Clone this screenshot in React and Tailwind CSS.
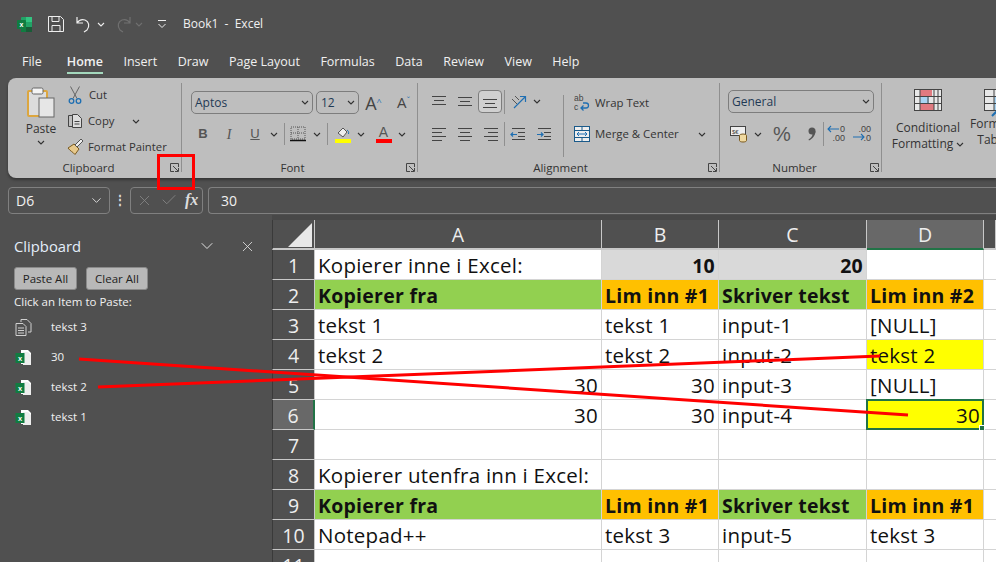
import React from 'react';
import { ChevronDown, X, Check } from 'lucide-react';

const Chev = ({ className = '', color = '#333' }) => (
  <svg width="8" height="5" viewBox="0 0 8 5" className={`shrink-0 ${className}`} fill="none" stroke={color} strokeWidth="1.1">
    <path d="M1 1l3 3 3-3" />
  </svg>
);

const Launcher = ({ className = '' }) => (
  <svg width="9" height="9" viewBox="0 0 9 9" className={className} fill="none" stroke="#444" strokeWidth="1">
    <path d="M8.5 4V.5H.5v8H4" />
    <path d="M3 3l5 5M8.5 5v3.5H5" />
  </svg>
);

const Lines = ({ widths, y = 0 }) => (
  <svg width="16" height="14" viewBox="0 0 16 14" stroke="#444" strokeWidth="1" fill="none">
    {widths.map(([x1, x2], i) => (
      <path key={i} d={`M${x1} ${y + 1.5 + i * 4}H${x2}`} />
    ))}
  </svg>
);

const Indent = ({ right }) => (
  <svg width="16" height="14" viewBox="0 0 16 14" fill="none">
    <path d="M2 1.500h13M8 5.500h7M8 9.500h7M2 12.500h13" stroke="#444" />
    {right
      ? <path d="M1 7.500h6M5 5.500l2 2-2 2" stroke="#1f6fb2" strokeWidth="1.200" />
      : <path d="M7 7.500H1M3 5.500l-2 2 2 2" stroke="#1f6fb2" strokeWidth="1.200" />}
  </svg>
);

const ExcelLogo = () => (
  <svg width="17" height="17" viewBox="0 0 17 17">
    <rect x="5" y="1" width="11" height="15" rx="1" fill="#21a366" />
    <rect x="10" y="1" width="6" height="5" fill="#33c481" />
    <rect x="10" y="11" width="6" height="5" fill="#185c37" />
    <rect x="5" y="11" width="5" height="5" fill="#107c41" />
    <rect x="1" y="4" width="9" height="9" rx="1" fill="#107c41" />
    <text x="5.5" y="11" textAnchor="middle" fontSize="7" fontWeight="700" fill="#fff" fontFamily="Liberation Sans">x</text>
  </svg>
);

const ClipExcel = () => (
  <svg width="17" height="17" viewBox="0 0 17 17">
    <path d="M6 1h7l3 3v11H6z" fill="#fff" />
    <path d="M8 3h5l3 3v10H8z" fill="#eee" />
    <rect x="0.5" y="4" width="9" height="10" fill="#107c41" />
    <text x="5" y="12" textAnchor="middle" fontSize="7.5" fontWeight="700" fill="#fff" fontFamily="Liberation Sans">x</text>
  </svg>
);

const ClipText = () => (
  <svg width="17" height="17" viewBox="0 0 17 17" fill="none" stroke="#d0d0d0" strokeWidth="1">
    <path d="M6 3V.5h6l4 4V13h-3" />
    <path d="M1 4.500h7l3 3v9H1z" />
    <path d="M3 9h6M3 11.500h6M3 14h6" />
  </svg>
);

const PasteIcon = () => (
  <svg width="30" height="32" viewBox="0 0 30 32">
    <rect x="2" y="4" width="19" height="25" rx="1" fill="#dcdcdc" stroke="#dca63f" strokeWidth="2" />
    <rect x="6" y="1" width="11" height="6" rx="1.500" fill="#f4f4f4" stroke="#666" />
    <rect x="13" y="11" width="15" height="19" fill="#e6e6e6" stroke="#666" />
  </svg>
);

const CutIcon = () => (
  <svg width="14" height="18" viewBox="0 0 14 18" fill="none">
    <path d="M2.500 0.500l6.500 12M11.500 0.500L5 12.500" stroke="#666" />
    <circle cx="3.500" cy="15" r="2.300" stroke="#1f6fb2" strokeWidth="1.300" />
    <circle cx="10.500" cy="15" r="2.300" stroke="#1f6fb2" strokeWidth="1.300" />
  </svg>
);

const CopyIcon = () => (
  <svg width="16" height="16" viewBox="0 0 16 16" fill="none" stroke="#444">
    <path d="M5 2.500H1.500v11H5" />
    <path d="M5.500 1.500h5l4 4v9h-9z" fill="#ddd" />
    <path d="M7.500 8.500h5M7.500 11h5" />
  </svg>
);

const BrushIcon = () => (
  <svg width="17" height="17" viewBox="0 0 17 17">
    <path d="M1 10l6-4 5 5-4 5.500C6 14 3 13 1 10z" fill="#e8c98b" stroke="#7a5a20" />
    <path d="M8 7l6-6 2 2-6 6z" fill="#eee" stroke="#555" />
  </svg>
);

const BorderIcon = () => (
  <svg width="16" height="16" viewBox="0 0 16 16" fill="none" stroke="#555" strokeWidth="1" strokeDasharray="1 1">
    <path d="M1 1h14v12H1zM8 1v12M1 7h14" />
    <path d="M0 14.500h16" stroke="#111" strokeWidth="1.500" strokeDasharray="none" />
  </svg>
);

const FillIcon = () => (
  <svg width="16" height="17" viewBox="0 0 16 17">
    <path d="M3 7l5-5 4 4-4 5z" fill="#eee" stroke="#555" />
    <path d="M12 4c1.500 1 2 2 1.500 4" stroke="#1f6fb2" fill="none" />
    <rect y="13" width="16" height="4" fill="#ffff00" />
  </svg>
);

const OrientIcon = () => (
  <svg width="18" height="16" viewBox="0 0 18 16" fill="none" stroke="#555">
    <path d="M2 5l5 5M5 2l4 4" />
    <path d="M4 14L15 3M10 2.500h5.500V8" stroke="#1f6fb2" strokeWidth="1.200" />
  </svg>
);

const WrapIcon = () => (
  <svg width="16" height="18" viewBox="0 0 16 18" fill="none">
    <path d="M9 9h3a2.500 2.500 0 010 5H7M9.500 11.500L7 14l2.500 2.500" stroke="#1f6fb2" strokeWidth="1.300" />
    <text x="0" y="7" fontSize="8.500" fill="#444" fontFamily="Liberation Sans">ab</text>
    <text x="0" y="16" fontSize="8.500" fill="#444" fontFamily="Liberation Sans">c</text>
  </svg>
);

const MergeIcon = () => (
  <svg width="16" height="16" viewBox="0 0 16 16" fill="none">
    <rect x="0.500" y="0.500" width="15" height="15" fill="#eee" stroke="#1a5a8a" />
    <path d="M1 4.500h14M1 11.500h14M8 1v3M8 12v3" stroke="#1a5a8a" />
    <path d="M3 8h10M5 6L3 8l2 2M11 6l2 2-2 2" stroke="#1f6fb2" />
  </svg>
);

const CondIcon = () => (
  <svg width="28" height="22" viewBox="0 0 28 22" fill="none">
    <rect x="0.500" y="0.500" width="27" height="21" fill="#e8e8e8" stroke="#444" />
    <rect x="6" y="1" width="12" height="6" fill="#e07a80" />
    <rect x="6" y="8" width="9" height="6" fill="#a8d4f2" />
    <rect x="6" y="15" width="14" height="6" fill="#e07a80" />
    <path d="M1 7.500h26M1 14.500h26M6 1v20M14 7v8M20 1v20M24 1v20" stroke="#444" />
  </svg>
);

const TableIcon = () => (
  <svg width="28" height="28" viewBox="0 0 28 28" fill="none">
    <rect x="0.500" y="0.500" width="27" height="21" fill="#e8e8e8" stroke="#444" />
    <rect x="10" y="8" width="17" height="13" fill="#a8d4f2" />
    <path d="M1 7.500h26M1 14.500h26M10 1v20" stroke="#444" />
    <path d="M8 27l8-8" stroke="#1f6fb2" strokeWidth="2" />
  </svg>
);

const CurrencyIcon = () => (
  <svg width="20" height="18" viewBox="0 0 20 18" fill="none">
    <rect x="0.500" y="1.500" width="15" height="9" fill="#eee" stroke="#444" />
    <text x="2" y="9" fontSize="6" fill="#444" fontFamily="Liberation Sans">$€</text>
    <ellipse cx="13" cy="10.500" rx="3.500" ry="1.500" fill="#f0d9a0" stroke="#7a5a20" />
    <path d="M9.500 10.500v5c0 2 7 2 7 0v-5" fill="#f0d9a0" stroke="#7a5a20" />
  </svg>
);

const CommaIcon = () => (
  <svg width="9" height="14" viewBox="0 0 9 14" fill="#555">
    <circle cx="5" cy="4" r="3.500" />
    <path d="M8.500 4c0 4-2.500 7.500-6.500 9.500l-.5-1C4 11 5.500 9 5.500 7z" />
  </svg>
);

const DecimalIcon = ({ more }) => (
  <div className="relative w-[16px] h-[18px] font-['Liberation_Sans'] text-[9px] leading-[9px] text-[#444] text-right">
    <div>{more ? '.00' : '0'}</div>
    <div>{more ? '.0' : '.00'}</div>
    <svg width="12" height="8" viewBox="0 0 12 8" className={`absolute left-[-2px] ${more ? 'top-[8px]' : 'top-0'}`} fill="none" stroke="#1f6fb2" strokeWidth="1.100">
      {more ? <path d="M0 4h11M8 1l3 3-3 3" /> : <path d="M12 4H1M4 1L1 4l3 3" />}
    </svg>
  </div>
);

const Sep = ({ className = '' }) => <div className={`w-px bg-[#8f8f8f] ${className}`} />;

const Slot = ({ w, children, active, className = '' }) => (
  <div className={`flex items-center justify-center shrink-0 ${w} ${className} ${active ? 'h-[23px] rounded-[4px] border border-[#7d7d7d] bg-[#d0d0d0]' : ''}`}>
    {children}
  </div>
);

const Group = ({ w, label, launcher, children, labelClass = '' }) => (
  <div className={`relative shrink-0 h-[89px] mt-[5px] ${w} border-r border-[#8f8f8f] flex flex-col`}>
    <div className="flex-1 min-h-0">{children}</div>
    <div className={`h-[18px] -mb-[5px] flex items-center justify-center text-[11.5px] text-[#333] ${labelClass}`}>{label}</div>
    {launcher && (
      <div className="absolute right-[2px] bottom-0 flex">
        <Launcher />
      </div>
    )}
  </div>
);

const ClipboardGroup = () => (
  <Group w="w-[174px]" label="Clipboard" launcher labelClass="pr-[12px]">
    <div className="flex h-full">
      <div className="w-[54px] flex flex-col items-center pl-[12px] pt-[4px]">
        <PasteIcon />
        <span className="text-[12px] text-[#333] mt-[2px] leading-[16px]">Paste</span>
        <Chev className="mt-[3px]" />
      </div>
      <div className="flex flex-col text-[11.3px] text-[#333] leading-[26px] pl-[5px] -mt-px">
        <div className="flex items-center gap-[7px] h-[26px] pl-[1px]">
          <CutIcon />
          Cut
        </div>
        <div className="flex items-center gap-[5px] h-[26px]">
          <CopyIcon />
          Copy
          <Chev className="ml-[13px]" />
        </div>
        <div className="flex items-center gap-[4px] h-[25px]">
          <BrushIcon />
          Format Painter
        </div>
      </div>
    </div>
  </Group>
);

const FontGroup = () => (
  <Group w="w-[236px]" label="Font" launcher labelClass="pr-[14px]">
    <div className="pl-[9px] pt-[8px]">
      <div className="flex items-center gap-[3px]">
        <div className="w-[122px] h-[23px] rounded-[5px] border border-[#7d7d7d] flex items-center justify-between px-[3px] text-[12px] text-[#1f3a55]">
          Aptos
          <Chev />
        </div>
        <div className="w-[43px] h-[23px] rounded-[5px] border border-[#7d7d7d] flex items-center justify-between pl-[4px] pr-[3px] text-[12px] text-[#1f3a55]">
          12
          <Chev />
        </div>
        <div className="w-[27px] -ml-[2px] text-[18px] leading-none text-[#444] text-center">A<sup className="text-[#1f6fb2] text-[9px]">^</sup></div>
        <div className="w-[27px] text-[15px] leading-none text-[#444] text-center">A<sup className="text-[#1f6fb2] text-[9px]">ˇ</sup></div>
      </div>
      <div className="flex items-center h-[22px] mt-[9px] -ml-px">
        <Slot w="w-[26px]"><b className="font-['Liberation_Sans'] text-[13px] text-[#555]">B</b></Slot>
        <Slot w="w-[26px]"><i className="font-['Liberation_Serif'] text-[14px] text-[#555]">I</i></Slot>
        <Slot w="w-[26px]"><u className="font-['Liberation_Sans'] text-[13px] text-[#555]">U</u></Slot>
        <Slot w="w-[11px]"><Chev /></Slot>
        <Sep className="h-[22px] ml-[5px]" />
        <Slot w="w-[26px]"><BorderIcon /></Slot>
        <Slot w="w-[11px]"><Chev /></Slot>
        <Sep className="h-[22px] ml-[5px]" />
        <Slot w="w-[29px]"><FillIcon /></Slot>
        <Slot w="w-[8px]"><Chev /></Slot>
        <Slot w="w-[29px]" className="ml-[4px]">
          <div className="flex flex-col items-center font-['Liberation_Sans'] text-[14px] leading-[14px] text-[#555]">
            A
            <div className="w-[16px] h-[4px] bg-[#ff0000]" />
          </div>
        </Slot>
        <Slot w="w-[8px]"><Chev /></Slot>
      </div>
    </div>
  </Group>
);

const AlignmentGroup = () => (
  <Group w="w-[302px]" label="Alignment" launcher labelClass="pr-[16px]">
    <div className="flex pl-[8px] pt-[7px]">
      <div>
        <div className="flex items-center h-[23px]">
          <Slot w="w-[26px]"><Lines widths={[[1, 15], [3, 13], [1, 15]]} /></Slot>
          <Slot w="w-[26px]"><Lines widths={[[1, 15], [3, 13], [1, 15]]} y={1} /></Slot>
          <Slot w="w-[24px]" active><Lines widths={[[1, 15], [3, 13], [1, 15]]} y={3} /></Slot>
          <Sep className="h-[24px] ml-[2px]" />
          <Slot w="w-[27px]"><OrientIcon /></Slot>
          <Slot w="w-[9px]"><Chev /></Slot>
        </div>
        <div className="flex items-center h-[24px] mt-[9px]">
          <Slot w="w-[26px]"><Lines widths={[[1, 15], [1, 11], [1, 15], [1, 11]]} /></Slot>
          <Slot w="w-[26px]"><Lines widths={[[1, 15], [3, 13], [1, 15], [3, 13]]} /></Slot>
          <Slot w="w-[26px]"><Lines widths={[[1, 15], [5, 15], [1, 15], [5, 15]]} /></Slot>
          <Sep className="h-[24px]" />
          <Slot w="w-[26px]"><Indent /></Slot>
          <Slot w="w-[26px]"><Indent right /></Slot>
        </div>
      </div>
      <Sep className="h-[62px] ml-[6px] mt-[5px]" />
      <div className="pl-[10px] text-[11.4px] text-[#333]">
        <div className="flex items-center gap-[5px] h-[23px] mt-[1px]">
          <WrapIcon />
          Wrap Text
        </div>
        <div className="flex items-center gap-[5px] h-[24px] mt-[8px]">
          <MergeIcon />
          Merge &amp; Center
          <Chev className="ml-[14px]" />
        </div>
      </div>
    </div>
  </Group>
);

const NumberGroup = () => (
  <Group w="w-[162px]" label="Number" launcher labelClass="pr-[12px]">
    <div className="pl-[8px] pt-[7px]">
      <div className="w-[146px] h-[23px] rounded-[5px] border border-[#7d7d7d] flex items-center justify-between px-[3px] text-[12px] text-[#1f3a55]">
        General
        <Chev />
      </div>
      <div className="flex items-center h-[24px] mt-[9px]">
        <Slot w="w-[24px]"><CurrencyIcon /></Slot>
        <Slot w="w-[12px]"><Chev /></Slot>
        <Slot w="w-[34px]" className="ml-px"><span className="font-['Liberation_Sans'] text-[20px] text-[#555]">%</span></Slot>
        <Slot w="w-[24px]"><CommaIcon /></Slot>
        <Sep className="h-[24px]" />
        <Slot w="w-[26px]"><DecimalIcon /></Slot>
        <Slot w="w-[26px]"><DecimalIcon more /></Slot>
      </div>
    </div>
  </Group>
);

const Ribbon = () => (
  <div className="ml-[8px] h-[100px] rounded-l-[8px] bg-[#bebebe] flex overflow-hidden shadow-[0_2px_3px_rgba(0,0,0,.35)] font-['Open_Sans',sans-serif]">
    <ClipboardGroup />
    <FontGroup />
    <AlignmentGroup />
    <NumberGroup />
    <div className="flex shrink-0 text-[12px] leading-[16px] text-[#333] text-center">
      <div className="w-[92px] flex flex-col items-center pt-[11px]">
        <CondIcon />
        <div className="mt-[9px]">Conditional</div>
        <div className="flex items-center gap-[3px]">Formatting <Chev /></div>
      </div>
      <div className="w-[56px] -ml-[4px] flex flex-col items-center pt-[11px] whitespace-nowrap">
        <TableIcon />
        <div className="-mt-[1px]">Format as</div>
        <div className="flex items-center gap-[3px]">Table <Chev /></div>
      </div>
    </div>
  </div>
);

const FormulaBar = () => (
  <div className="flex items-center h-[28px] mt-[8px] pl-[8px] font-['Open_Sans',sans-serif]">
    <div className="w-[102px] h-[27px] rounded-[4px] border border-[#808080] flex items-center justify-between pl-[7px] pr-[5px] text-[14px] text-[#f0f0f0]">
      D6
      <ChevronDown size={15} color="#ddd" strokeWidth={1.5} />
    </div>
    <div className="w-[20px] text-center text-[#ddd] text-[12px] font-bold leading-none">⋮</div>
    <div className="w-[73px] h-[27px] rounded-[4px] border border-[#808080] flex items-center pl-[5px] gap-[7px]">
      <X size={17} color="#858585" strokeWidth={1.2} />
      <Check size={18} color="#858585" strokeWidth={1.2} />
      <i className="font-['Liberation_Serif'] font-bold text-[16px] text-[#ddd]">fx</i>
    </div>
    <div className="flex-1 h-[27px] ml-[5px] rounded-l-[4px] border border-r-0 border-[#808080] flex items-center pl-[12px] text-[14px] text-[#f0f0f0]">
      30
    </div>
  </div>
);

const ClipItem = ({ icon, text }) => (
  <div className="flex items-center h-[30px] pl-[15px] text-[11.5px] text-[#f0f0f0]">
    <div className="w-[36px]">{icon}</div>
    {text}
  </div>
);

const ClipboardPane = () => (
  <div className="w-[272px] shrink-0 bg-[#505050] font-['Open_Sans',sans-serif] pl-[14px] pt-[20px]">
    <div className="flex items-center h-[22px] pr-[16px]">
      <span className="flex-1 text-[14.8px] text-[#e4eefa]">Clipboard</span>
      <ChevronDown size={20} color="#e0e0e0" strokeWidth={1.2} />
      <X size={17} color="#e0e0e0" strokeWidth={1.2} className="ml-[22px]" />
    </div>
    <div className="flex gap-[9px] mt-[10px]">
      <div className="w-[63px] h-[23px] rounded-[3px] bg-[#b8b8b8] border border-[#8a8a8a] text-[11.5px] text-[#222] flex items-center justify-center">Paste All</div>
      <div className="w-[62px] h-[23px] rounded-[3px] bg-[#b8b8b8] border border-[#8a8a8a] text-[11.5px] text-[#222] flex items-center justify-center">Clear All</div>
    </div>
    <div className="text-[11.5px] text-[#f0f0f0] mt-[3px] leading-[18px]">Click an Item to Paste:</div>
    <div className="-ml-[14px] mt-[1px]">
      <ClipItem icon={<ClipText />} text="tekst 3" />
      <ClipItem icon={<ClipExcel />} text="30" />
      <ClipItem icon={<ClipExcel />} text="tekst 2" />
      <ClipItem icon={<ClipExcel />} text="tekst 1" />
    </div>
  </div>
);

const GREEN = 'bg-[#92d050] font-bold';
const ORANGE = 'bg-[#ffc000] font-bold';
const GRAY = 'bg-[#d9d9d9] font-bold text-right';
const YELLOW = 'bg-[#ffff00]';
const RIGHT = 'bg-white text-right';

const ROWS = [
  [['Kopierer inne i Excel:'], ['10', GRAY], ['20', GRAY], ['']],
  [['Kopierer fra', GREEN], ['Lim inn #1', ORANGE], ['Skriver tekst', GREEN], ['Lim inn #2', ORANGE]],
  [['tekst 1'], ['tekst 1'], ['input-1'], ['[NULL]']],
  [['tekst 2'], ['tekst 2'], ['input-2'], ['tekst 2', YELLOW]],
  [['30', RIGHT], ['30', RIGHT], ['input-3'], ['[NULL]']],
  [['30', RIGHT], ['30', RIGHT], ['input-4'], ['30', `${YELLOW} text-right`, true]],
  [[''], [''], [''], ['']],
  [['Kopierer utenfra inn i Excel:'], [''], [''], ['']],
  [['Kopierer fra', GREEN], ['Lim inn #1', ORANGE], ['Skriver tekst', GREEN], ['Lim inn #1', ORANGE]],
  [['Notepad++'], ['tekst 3'], ['input-5'], ['tekst 3']],
  [[''], [''], [''], ['']],
];

const cellFont = (cls) => (cls.includes('font-bold') ? 'text-[19.5px]' : 'text-[20.5px]');

const Sheet = () => (
  <div className="flex-1 min-w-0 font-['Open_Sans',sans-serif] text-[19.5px] text-[#111] pt-[5px] bg-[#484848]">
    <div className="grid grid-cols-[43px_287px_117px_148px_117px_1fr] auto-rows-[30px]">
      <div className="bg-[#505050] border-r border-b-2 border-[#c8c8c8] border-l border-l-[#3a3a3a] relative">
        <div className="absolute right-[2px] bottom-[1px] w-0 h-0 border-l-[24px] border-l-transparent border-b-[24px] border-b-[#e8e8e8]" />
      </div>
      {['A', 'B', 'C', 'D', ''].map((c) => (
        <div
          key={c}
          className={`flex items-center justify-center pt-[2px] text-[#eee] border-r border-[#c8c8c8] border-b-2 ${c === 'D' ? 'bg-[#686868] border-b-[#217346]' : 'bg-[#505050] border-b-[#c8c8c8]'}`}
        >
          {c}
        </div>
      ))}
      {ROWS.map((row, i) => (
        <React.Fragment key={i}>
          <div className={`flex items-center justify-center pt-[2px] text-[#eee] border-b border-[#c8c8c8] border-l border-l-[#3a3a3a] ${i === 5 ? 'bg-[#686868] border-r-2 border-r-[#217346]' : 'bg-[#505050] border-r border-r-[#c8c8c8]'}`}>
            {i + 1}
          </div>
          {row.map(([text, cls = '', selected], j) => (
            <div
              key={j}
              className={`relative whitespace-nowrap px-[3px] leading-[31px] tracking-[0.25px] border-r border-b border-[#d4d4d4] ${cellFont(cls)} ${cls || 'bg-white'}`}
            >
              {text}
              {selected && (
                <div className="absolute -inset-px border-2 border-[#217346]">
                  <div className="absolute -right-[3px] -bottom-[3px] w-[6px] h-[6px] bg-[#217346] border border-white" />
                </div>
              )}
            </div>
          ))}
          <div className="bg-white border-b border-[#d4d4d4]" />
        </React.Fragment>
      ))}
    </div>
  </div>
);

export default function App() {
  return (
    <div className="relative w-[996px] h-[562px] overflow-hidden bg-[#505050]">
      <div className="flex items-center h-[48px] pl-[16px] font-['Open_Sans',sans-serif] text-[12px] text-[#f0f0f0]">
        <ExcelLogo />
        <svg width="18" height="18" viewBox="0 0 18 18" fill="none" stroke="#eee" className="ml-[14px]">
          <path d="M1.500 1.500h12l3 3v12h-15z" />
          <path d="M5 1.500v5h7v-5M5 16.500v-6h8v6" />
        </svg>
        <svg width="18" height="18" viewBox="0 0 18 18" fill="none" stroke="#eee" strokeWidth="1.200" className="ml-[10px]">
          <path d="M2 2v6h6M2 8c2-3 5-4 8-3 4 1.500 5 6 2 10l-3 2" />
        </svg>
        <Chev className="ml-[4px]" color="#eee" />
        <svg width="18" height="18" viewBox="0 0 18 18" fill="none" stroke="#707070" strokeWidth="1.200" className="ml-[9px]">
          <path d="M16 2v6h-6M16 8c-2-3-5-4-8-3-4 1.500-5 6-2 10l3 2" />
        </svg>
        <Chev className="ml-[3px]" color="#707070" />
        <svg width="10" height="9" viewBox="0 0 10 9" fill="none" stroke="#eee" className="ml-[14px]">
          <path d="M1 .5h8M1.500 4l3.500 3.500L8.500 4" />
        </svg>
        <span className="ml-[16px]">Book1&nbsp; -&nbsp; Excel</span>
      </div>
      <div className="flex items-center gap-[20.5px] h-[30px] pl-[22px] pb-[2px] font-['Open_Sans',sans-serif] text-[12.5px] text-[#f0f0f0]">
        <span>File</span>
        <span className="relative font-semibold ml-[4.500px]">
          Home
          <div className="absolute left-0 right-0 -bottom-[3px] h-[2px] bg-[#a4d8bd]" />
        </span>
        {['Insert', 'Draw', 'Page Layout', 'Formulas', 'Data', 'Review', 'View', 'Help'].map((t) => (
          <span key={t}>{t}</span>
        ))}
      </div>
      <Ribbon />
      <FormulaBar />
      <div className="flex h-[348px] mt-[1px]">
        <ClipboardPane />
        <Sheet />
      </div>
      {/* hand-drawn annotations on top of the screenshot */}
      <div className="absolute left-[157px] top-[154px] w-[38px] h-[36px] border-[3px] border-[#ff0000]" />
      <svg className="absolute inset-0 pointer-events-none" width="996" height="562" fill="none" stroke="#ff0000" strokeWidth="3">
        <path d="M79 359L908 415" />
        <path d="M98 387L880 356" />
      </svg>
    </div>
  );
}
